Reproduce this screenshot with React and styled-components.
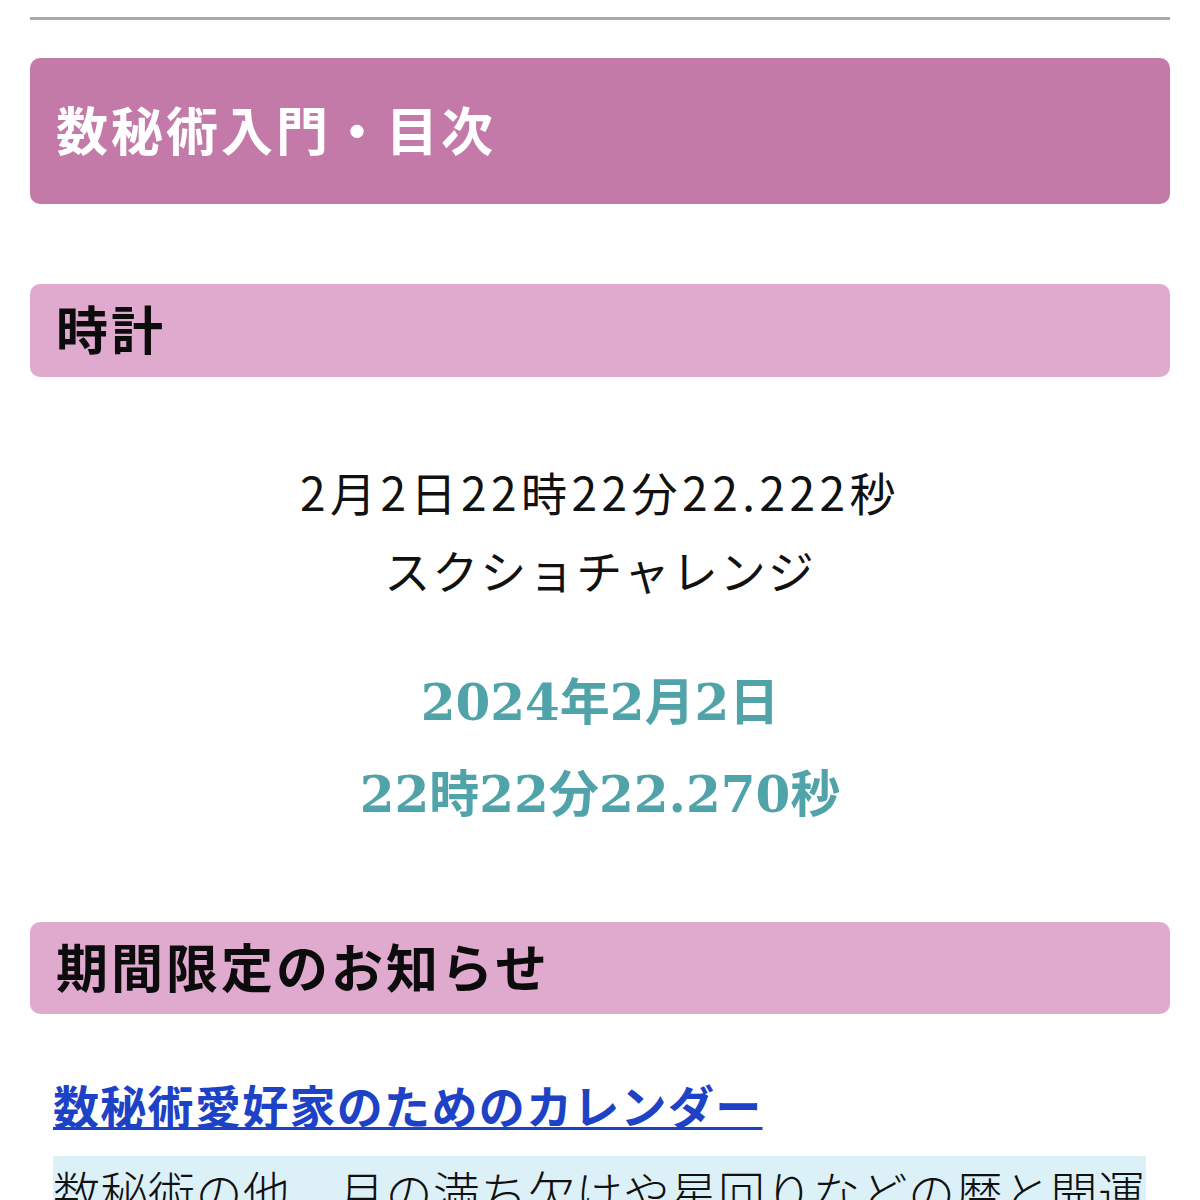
import styled, { createGlobalStyle } from "styled-components";

const GlobalStyle = createGlobalStyle`
  html, body {
    margin: 0;
    padding: 0;
    background: #ffffff;
  }
  body {
    font-family: "Noto Sans CJK JP", "Noto Sans", sans-serif;
    color: #111;
  }
`;

const Page = styled.div`
  width: 1200px;
  height: 1200px;
  overflow: hidden;
  padding: 0 30px;
  box-sizing: border-box;
`;

const Rule = styled.hr`
  margin: 17px 0 0 0;
  border: none;
  border-top: 3px solid #a9a9a9;
  height: 0;
`;

const SectionHead = styled.h2`
  margin: ${(p) => p.$top}px 0 0 0;
  height: ${(p) => p.$height}px;
  box-sizing: border-box;
  padding: 0 26px 6px;
  display: flex;
  align-items: center;
  border-radius: 10px;
  background: ${(p) => (p.$main ? "#c47aa9" : "#e0a9ce")};
  color: ${(p) => (p.$main ? "#ffffff" : "#0c0c0c")};
  font-size: 52px;
  font-weight: 700;
  letter-spacing: 3px;
`;

const Clock = styled.div`
  margin-top: 75px;
  text-align: center;
`;

const Caption = styled.p`
  margin: 0;
  font-size: 46px;
  font-weight: 400;
  line-height: 78px;
  letter-spacing: ${(p) => p.$spacing}px;
  color: #111;
`;

const Stamp = styled.div`
  margin-top: 49px;
`;

const StampLine = styled.p`
  margin: 0;
  font-family: "DejaVu Serif", "Noto Sans CJK JP", serif;
  font-size: 50px;
  font-weight: 700;
  line-height: 92px;
  color: #4fa3a9;
`;

const Notice = styled.div`
  padding: 0 20px 0 23px;
`;

const NoticeLink = styled.a`
  display: inline-block;
  margin-top: 60px;
  font-size: 46px;
  font-weight: 700;
  line-height: 60px;
  letter-spacing: 1.3px;
  color: #1d42c6;
  text-decoration: underline;
  text-decoration-thickness: 3px;
  text-underline-offset: 3px;
`;

const Blurb = styled.p`
  margin: 19px 0 0 0;
  font-size: 47px;
  font-weight: 300;
  line-height: 75px;
  letter-spacing: 0.5px;
  color: #111;
`;

const Marked = styled.span`
  background: #dcf0f8;
`;

export default function App() {
  return (
    <>
      <GlobalStyle />
      <Page>
        <Rule />
        <SectionHead $main $top={38} $height={146}>
          数秘術入門・目次
        </SectionHead>
        <SectionHead $top={80} $height={93}>
          時計
        </SectionHead>
        <Clock>
          <Caption $spacing={4.5}>2月2日22時22分22.222秒</Caption>
          <Caption $spacing={2}>スクショチャレンジ</Caption>
          <Stamp>
            <StampLine>2024年2月2日</StampLine>
            <StampLine>22時22分22.270秒</StampLine>
          </Stamp>
        </Clock>
        <SectionHead $top={81} $height={92}>
          期間限定のお知らせ
        </SectionHead>
        <Notice>
          <NoticeLink href="#">数秘術愛好家のためのカレンダー</NoticeLink>
          <Blurb>
            <Marked>
              数秘術の他、月の満ち欠けや星回りなどの暦と開運日を一冊にまとめたカレンダーです。
            </Marked>
          </Blurb>
        </Notice>
      </Page>
    </>
  );
}
